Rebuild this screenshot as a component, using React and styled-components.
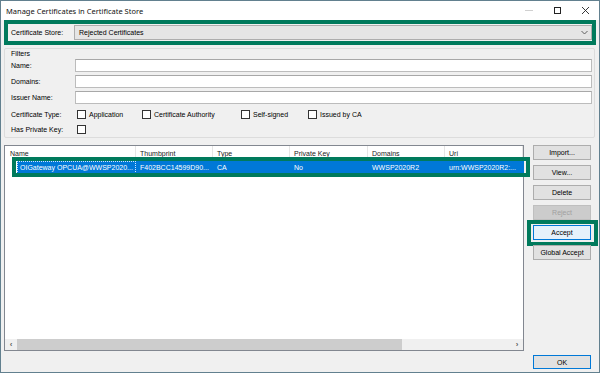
import React from 'react';
import styled, { createGlobalStyle, css } from 'styled-components';

const GlobalStyle = createGlobalStyle`
  html, body {
    margin: 0;
    padding: 0;
    overflow: hidden;
    background: #f0f0f0;
  }
  * {
    box-sizing: border-box;
  }
`;

const green = '#007a5c';

const Window = styled.div`
  width: 600px;
  height: 373px;
  border: 1px solid #62808f;
  display: flex;
  flex-direction: column;
  font-family: "Liberation Sans", Arial, sans-serif;
  font-size: 7px;
  color: #000;
  background: #f0f0f0;
`;

const TitleBar = styled.div`
  height: 19px;
  background: #fff;
  display: flex;
  align-items: center;
  padding-left: 5px;
  font-family: "Noto Sans", sans-serif;
  font-size: 7.5px;
  color: #111;
`;

const Title = styled.span`
  flex: 1;
`;

const Controls = styled.div`
  display: flex;
  align-items: center;
  height: 100%;
`;

const ControlBtn = styled.div`
  width: 28px;
  height: 100%;
  display: flex;
  align-items: center;
  justify-content: center;
`;

const Body = styled.div`
  flex: 1;
  display: flex;
  flex-direction: column;
  padding: 0 3px 0 3px;
`;

const StoreFrame = styled.div`
  height: 25px;
  border: 4px solid ${green};
  display: flex;
  align-items: center;
  padding: 0 0 0 3px;
`;

const Label = styled.span`
  width: ${p => p.$w || 64}px;
  flex: none;
  white-space: nowrap;
`;

const Combo = styled.div`
  flex: 1;
  height: 15px;
  background: #e5e5e5;
  border: 1px solid #adadad;
  display: flex;
  align-items: center;
  padding-left: 4px;
`;

const ComboText = styled.span`
  flex: 1;
`;

const ComboArrow = styled.svg`
  width: 7px;
  height: 5px;
  margin-right: 3px;
`;

const Group = styled.div`
  margin: 3px 1px 0 0;
  height: 90px;
  border: 1px solid #dcdcdc;
  border-radius: 2px;
  padding: 0 2px 0 6px;
  display: flex;
  flex-direction: column;
`;

const GroupTitle = styled.div`
  height: 9px;
  line-height: 9px;
`;

const FieldRow = styled.div`
  display: flex;
  align-items: center;
  height: 13px;
  margin-top: ${p => p.$top}px;
`;

const TextBox = styled.div`
  flex: 1;
  height: 13px;
  background: #fff;
  border: 1px solid #bcbcbc;
  border-top-color: #a8a8a8;
`;

const CheckRow = styled.div`
  display: flex;
  align-items: center;
  height: 10px;
  margin-top: 5px;
`;

const Option = styled.label`
  display: flex;
  align-items: center;
  width: ${p => (p.$w ? `${p.$w}px` : 'auto')};
  flex: none;
  margin-left: ${p => p.$first ? 2 : 0}px;
  white-space: nowrap;
`;

const Box = styled.span`
  width: 9px;
  height: 9px;
  background: #fff;
  border: 1px solid #333;
  margin-right: 3px;
  flex: none;
`;

const Main = styled.div`
  display: flex;
  margin-top: 7px;
`;

const ListView = styled.div`
  position: relative;
  width: 520px;
  height: 206px;
  border: 1px solid #828790;
  background: #fff;
  display: flex;
  flex-direction: column;
`;

const cols = [131, 77, 77, 78, 77, 78];

const Header = styled.div`
  display: flex;
  height: 14px;
  flex: none;
`;

const HeadCell = styled.div`
  width: ${p => p.$w}px;
  flex: none;
  display: flex;
  align-items: center;
  padding: 1px 0 0 ${p => p.$pl ?? 4}px;
  border-right: 1px solid #e5e5e5;
  color: #222;
`;

const Row = styled.div`
  display: flex;
  height: 13px;
  margin-top: 1px;
  margin-left: 12px;
  margin-right: -1px;
  background: ${p => p.$selected ? '#0078d7' : 'transparent'};
  color: ${p => p.$selected ? '#fff' : '#000'};
`;

const Cell = styled.div`
  width: ${p => p.$w}px;
  flex: none;
  display: flex;
  align-items: center;
  padding-left: 4px;
  white-space: nowrap;
  overflow: hidden;
  ${p => p.$focus && css`
    padding-left: 2px;
    border: 1px dotted #cfe6ff;
  `}
`;

const RowHighlight = styled.div`
  position: absolute;
  left: 7px;
  top: 11px;
  width: 518px;
  height: 20px;
  border: 4px solid ${green};
  pointer-events: none;
`;

const Spacer = styled.div`
  flex: 1;
`;

const HScroll = styled.div`
  height: 11px;
  flex: none;
  display: flex;
  align-items: center;
  background: #f0f0f0;
`;

const ScrollArrow = styled.div`
  width: 12px;
  height: 100%;
  display: flex;
  align-items: center;
  justify-content: center;
  color: #606060;
  font-size: 8px;
  font-weight: bold;
`;

const Thumb = styled.div`
  width: 385px;
  height: 100%;
  background: #cdcdcd;
`;

const Buttons = styled.div`
  margin-left: 9px;
  width: 58px;
  display: flex;
  flex-direction: column;
  gap: 5px;
`;

const Button = styled.div`
  position: relative;
  height: 15px;
  display: flex;
  align-items: center;
  justify-content: center;
  background: ${p => p.$disabled ? '#cccccc' : p.$focused ? '#e5f1fb' : '#e1e1e1'};
  border: 1px solid ${p => p.$disabled ? '#bfbfbf' : p.$focused || p.$default ? '#0078d7' : '#adadad'};
  color: ${p => p.$disabled ? '#a0a0a0' : '#000'};
  ${p => p.$highlight && css`
    &::before {
      content: '';
      position: absolute;
      left: -7px;
      right: -8px;
      top: -6px;
      bottom: -7px;
      border: 4px solid ${green};
    }
  `}
`;

const Footer = styled.div`
  display: flex;
  justify-content: flex-end;
  padding-right: 5px;
  margin-top: 4px;
`;

const OkButton = styled(Button)`
  width: 58px;
  height: 14px;
`;

const headers = ['Name', 'Thumbprint', 'Type', 'Private Key', 'Domains', 'Uri'];
const values = ['OIGateway OPCUA@WWSP2020...', 'F402BCC14599D90...', 'CA', 'No', 'WWSP2020R2', 'urn:WWSP2020R2:...'];

export default function App() {
  return (
    <Window>
      <GlobalStyle />
      <TitleBar>
        <Title>Manage Certificates in Certificate Store</Title>
        <Controls>
          <ControlBtn>
            <svg width="8" height="1"><rect width="8" height="1" fill="#d0d0d0" /></svg>
          </ControlBtn>
          <ControlBtn>
            <svg width="7" height="7"><rect x="0.5" y="0.5" width="6" height="6" fill="none" stroke="#222" /></svg>
          </ControlBtn>
          <ControlBtn>
            <svg width="7" height="7"><path d="M0 0 L7 7 M7 0 L0 7" stroke="#222" strokeWidth="0.9" /></svg>
          </ControlBtn>
        </Controls>
      </TitleBar>
      <Body>
        <StoreFrame>
          <Label $w={63}>Certificate Store:</Label>
          <Combo>
            <ComboText>Rejected Certificates</ComboText>
            <ComboArrow viewBox="0 0 7 5">
              <path d="M0.5 1 L3.5 4 L6.5 1" fill="none" stroke="#606060" strokeWidth="1" />
            </ComboArrow>
          </Combo>
        </StoreFrame>
        <Group>
          <GroupTitle>Filters</GroupTitle>
          <FieldRow $top={1}><Label>Name:</Label><TextBox /></FieldRow>
          <FieldRow $top={3}><Label>Domains:</Label><TextBox /></FieldRow>
          <FieldRow $top={3}><Label>Issuer Name:</Label><TextBox /></FieldRow>
          <CheckRow>
            <Label>Certificate Type:</Label>
            <Option $first $w={65}><Box />Application</Option>
            <Option $w={99}><Box />Certificate Authority</Option>
            <Option $w={67}><Box />Self-signed</Option>
            <Option><Box />Issued by CA</Option>
          </CheckRow>
          <CheckRow>
            <Label>Has Private Key:</Label>
            <Option $first><Box /></Option>
          </CheckRow>
        </Group>
        <Main>
          <ListView>
            <Header>
              {headers.map((h, i) => (
                <HeadCell key={h} $w={cols[i]} $pl={i === 0 ? 5 : 4}>{h}</HeadCell>
              ))}
            </Header>
            <Row $selected>
              {values.map((v, i) => (
                <Cell key={i} $w={i === 0 ? cols[0] - 12 : cols[i]} $focus={i === 0}>{v}</Cell>
              ))}
            </Row>
            <RowHighlight />
            <Spacer />
            <HScroll>
              <ScrollArrow>‹</ScrollArrow>
              <Thumb />
              <Spacer />
              <ScrollArrow>›</ScrollArrow>
            </HScroll>
          </ListView>
          <Buttons>
            <Button>Import...</Button>
            <Button>View...</Button>
            <Button>Delete</Button>
            <Button $disabled>Reject</Button>
            <Button $focused $highlight>Accept</Button>
            <Button>Global Accept</Button>
          </Buttons>
        </Main>
        <Footer>
          <OkButton $default>OK</OkButton>
        </Footer>
      </Body>
    </Window>
  );
}
